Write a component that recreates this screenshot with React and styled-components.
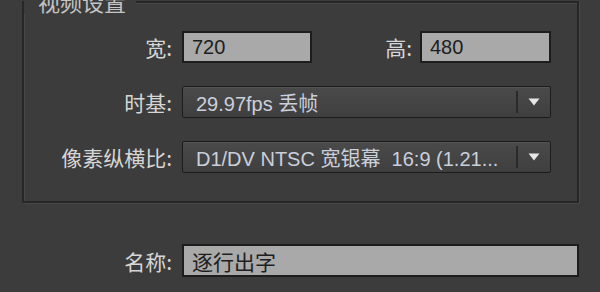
import React from "react";
import styled, { createGlobalStyle } from "styled-components";

const Global = createGlobalStyle`
  html, body { margin: 0; padding: 0; background: #3c3c3c; }
  body { font-family: "Liberation Sans", "Noto Sans CJK SC", sans-serif; }
  * { box-sizing: border-box; }
`;

const Page = styled.div`
  width: 600px;
  height: 292px;
  overflow: hidden;
  background: #3c3c3c;
  padding-top: 1px;
`;

const Frame = styled.section`
  position: relative;
  margin-left: 22px;
  width: 557px;
  height: 202px;
  border: 2px solid #272727;
  box-shadow: 1px 1px 0 #474747, inset 1px 1px 0 #474747;
  padding-top: 28px;
`;

const Legend = styled.div`
  position: absolute;
  top: -15px;
  left: 0;
  padding: 0 10px 0 14px;
  background: #3c3c3c;
  color: #c4c4c4;
  font-family: "Noto Sans CJK SC", sans-serif;
  font-size: 22px;
  line-height: 26px;
`;

const Grid = styled.div`
  display: grid;
  grid-template-columns: 148px ${(p) => p.$control}px;
  column-gap: 10px;
  row-gap: 23px;
  align-items: center;
`;

const Label = styled.div`
  color: #d6d6d6;
  font-family: "Noto Sans CJK SC", sans-serif;
  font-size: 21px;
  line-height: 26px;
  text-align: right;
  white-space: nowrap;
  flex: ${(p) => (p.$grow ? 1 : "none")};
  padding-right: ${(p) => (p.$grow ? "8px" : "0")};
`;

const SizeRow = styled.div`
  display: flex;
  align-items: center;
`;

const Input = styled.div`
  width: ${(p) => (p.$w ? `${p.$w}px` : "100%")};
  height: ${(p) => p.$h || 32}px;
  background: #a9a9a9;
  border: 2px solid #1d1d1d;
  color: #1e1e1e;
  font-family: "Liberation Sans", "Noto Sans CJK SC", sans-serif;
  font-size: ${(p) => p.$fs || 20}px;
  display: flex;
  align-items: center;
  padding-left: 8px;
  white-space: nowrap;
`;

const Select = styled.div`
  width: 100%;
  height: 32px;
  display: flex;
  align-items: stretch;
  border: 1px solid #1c1c1c;
  border-radius: 2px;
  background: linear-gradient(#4a4a4a, #3f3f3f);
  box-shadow: inset 0 1px 0 #555;
`;

const SelectText = styled.div`
  flex: 1;
  display: flex;
  align-items: center;
  padding-left: 13px;
  color: #cbcfdc;
  font-family: "Liberation Sans", "Noto Sans CJK SC", sans-serif;
  font-size: 20px;
  white-space: pre;
  overflow: hidden;
`;

const SelectButton = styled.div`
  width: 34px;
  border-left: 2px solid #2a2a2a;
  margin: 4px 0;
  display: flex;
  align-items: center;
  justify-content: center;
`;

const NameGrid = styled(Grid)`
  margin-top: 41px;
  margin-left: 24px;
`;

function Arrow() {
  return (
    <svg width="12" height="8" viewBox="0 0 12 8">
      <path d="M0.5 0.5 L11.5 0.5 L6 7.5 Z" fill="#e6e6e6" />
    </svg>
  );
}

function Dropdown({ children }) {
  return (
    <Select>
      <SelectText>{children}</SelectText>
      <SelectButton>
        <Arrow />
      </SelectButton>
    </Select>
  );
}

export default function App() {
  return (
    <Page>
      <Global />
      <Frame>
        <Legend>视频设置</Legend>
        <Grid $control={369}>
          <Label>宽:</Label>
          <SizeRow>
            <Input $w={130}>720</Input>
            <Label $grow>高:</Label>
            <Input $w={131}>480</Input>
          </SizeRow>
          <Label>时基:</Label>
          <Dropdown>29.97fps 丢帧</Dropdown>
          <Label>像素纵横比:</Label>
          <Dropdown>D1/DV NTSC 宽银幕  16:9 (1.21...</Dropdown>
        </Grid>
      </Frame>
      <NameGrid $control={397}>
        <Label>名称:</Label>
        <Input $h={33} $fs={21}>逐行出字</Input>
      </NameGrid>
    </Page>
  );
}
